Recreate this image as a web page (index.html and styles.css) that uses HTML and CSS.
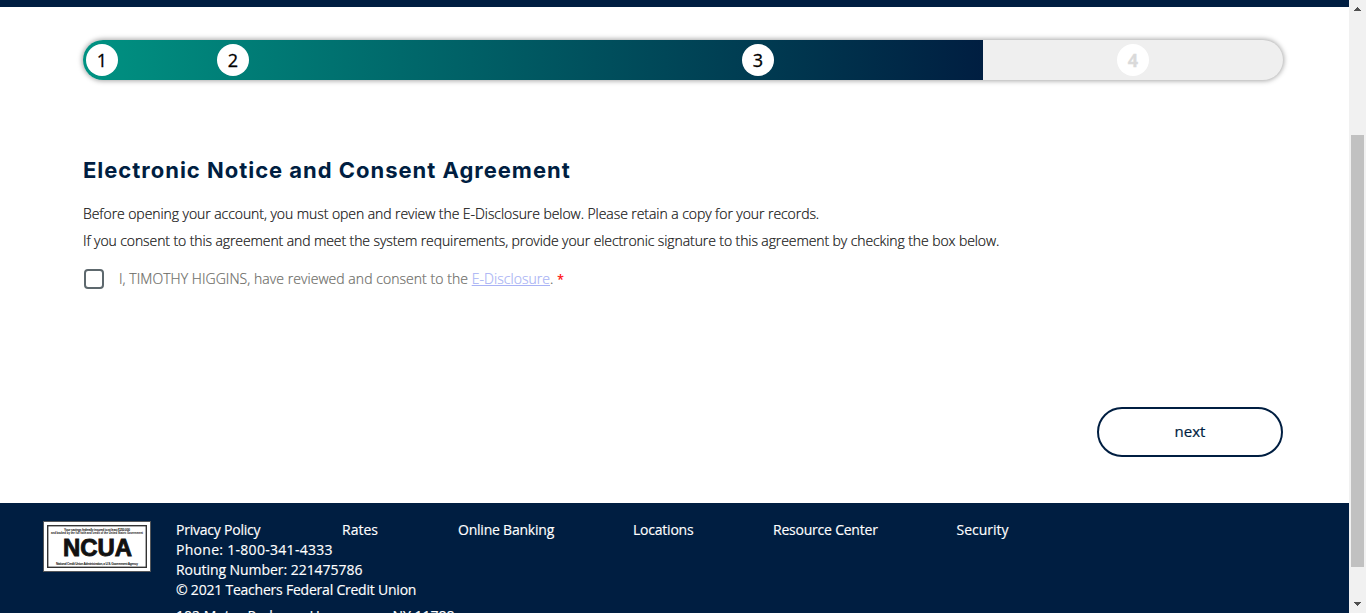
FILE: index.html
```html
<!DOCTYPE html>
<html lang="en">
<head>
<meta charset="utf-8">
<title>Electronic Notice and Consent Agreement</title>
<link rel="stylesheet" href="styles.css">
</head>
<body>
<div class="page">
  <header class="topbar"></header>
  <main class="content">
    <div class="progress">
      <div class="progress-fill">
        <span class="step step-1">1</span>
        <span class="step step-2">2</span>
        <span class="step step-3">3</span>
      </div>
      <div class="progress-rest"><span class="step step-4">4</span></div>
    </div>
    <h1 class="title">Electronic Notice and Consent Agreement</h1>
    <p class="text text-first">Before opening your account, you must open and review the E-Disclosure below. Please retain a copy for your records.</p>
    <p class="text text-second">If you consent to this agreement and meet the system requirements, provide your electronic signature to this agreement by checking the box below.</p>
    <label class="consent">
      <span class="checkbox"></span>
      <span class="consent-text">I, TIMOTHY HIGGINS, have reviewed and consent to the <a class="link">E-Disclosure</a>. <span class="required">*</span></span>
    </label>
    <div class="actions"><button class="next">next</button></div>
  </main>
  <footer class="footer">
    <svg class="ncua" width="108" height="51" viewBox="0 0 108 51">
      <rect x=".5" y=".5" width="107" height="50" fill="#fff" stroke="#55575a"/>
      <rect x="4.7" y="4.7" width="98.6" height="41.6" fill="#fff" stroke="#333" stroke-width="1.4"/>
      <g fill="#111" font-family="Liberation Sans, sans-serif" font-weight="700" text-anchor="middle">
        <text x="54" y="9.8" font-size="3.2" textLength="66">Your savings federally insured to at least $250,000</text>
        <text x="54" y="13.2" font-size="3" textLength="92" lengthAdjust="spacingAndGlyphs">and backed by the full faith and credit of the United States Government</text>
        <text x="54.5" y="35.4" font-size="24" textLength="69" lengthAdjust="spacingAndGlyphs" stroke="#111" stroke-width=".9">NCUA</text>
        <text x="54" y="43.5" font-size="3.2" textLength="82">National Credit Union Administration, a U.S. Government Agency</text>
      </g>
    </svg>
    <div class="footer-info">
      <nav class="links">
        <a class="l-privacy">Privacy Policy</a><a class="l-rates">Rates</a><a class="l-banking">Online Banking</a><a class="l-locations">Locations</a><a class="l-resource">Resource Center</a><a class="l-security">Security</a>
      </nav>
      <div class="phone">Phone: 1-800-341-4333</div>
      <div class="routing">Routing Number: 221475786</div>
      <div class="copyright">© 2021 Teachers Federal Credit Union</div>
      <div class="address">102 Motor Parkway, Hauppauge, NY 11788</div>
    </div>
  </footer>
</div>
<div class="scrollbar">
  <svg class="arrow" width="7" height="4" viewBox="0 0 7 4" shape-rendering="crispEdges"><path d="M3 0h1v1h1v1h1v1h1v1H0V3h1V2h1V1h1z" fill="#505050"/></svg>
  <div class="thumb"></div>
  <svg class="arrow arrow-down" width="7" height="4" viewBox="0 0 7 4" shape-rendering="crispEdges"><path d="M0 0h7v1H6v1H5v1H4v1H3V3H2V2H1V1H0z" fill="#505050"/></svg>
</div>
</body>
</html>
```
FILE: styles.css
```css
* { box-sizing: border-box; }
body {
  margin: 0;
  width: 1366px;
  height: 613px;
  overflow: hidden;
  display: flex;
  background: #fff;
  font-family: "Open Sans", "Noto Sans", sans-serif;
  font-size: 14px;
}
.page { width: 1349px; height: 613px; overflow: hidden; display: flex; flex-direction: column; }
.topbar { height: 7px; flex: none; background: #001e41; }
.content { height: 496px; flex: none; padding: 33px 66px 0 83px; display: flex; flex-direction: column; }
.progress {
  display: flex;
  height: 40px;
  width: 1200px;
  flex: none;
  border-radius: 20px;
  overflow: hidden;
  background: #efefef;
  box-shadow: 0 0 5px 1px rgba(0, 0, 0, .35);
}
.progress-fill { display: flex; align-items: center; width: 900px; background: linear-gradient(90deg, #009282, #001e41); }
.progress-rest { display: flex; align-items: center; flex: 1; }
.step {
  display: flex;
  align-items: center;
  justify-content: center;
  width: 32px;
  height: 32px;
  border-radius: 50%;
  background: #fff;
  color: #000;
  font-size: 18px;
  font-weight: 500;
  line-height: 30px;
  -webkit-text-stroke: .3px;
}
.step-1 { margin-left: 3px; }
.step-2 { margin-left: 99px; }
.step-3 { margin-left: 493px; }
.step-4 { margin-left: 134px; color: #dadada; font-weight: 700; }
.title {
  margin: 74px 0 0;
  height: 32px;
  font: 700 22px/32px Inter, sans-serif;
  letter-spacing: .98px;
  color: #001e41;
  white-space: nowrap;
}
.text { margin: 0; height: 27px; line-height: 27px; color: #111; font-weight: 300; -webkit-text-stroke: .2px; white-space: nowrap; }
.text-first { margin-top: 14px; letter-spacing: -.063px; }
.text-second { letter-spacing: -.093px; }
.consent { display: flex; align-items: center; height: 22px; margin-top: 14px; padding-left: 1px; gap: 15px; color: #6d6d68; font-weight: 300; white-space: nowrap; }
.consent-text { padding-bottom: 2px; letter-spacing: .05px; -webkit-text-stroke: .2px; }
.checkbox { width: 20px; height: 20px; border: 2px solid #5d686d; border-radius: 4px; }
.link { color: #a9b3f5; text-decoration: underline; }
.required { color: #f00; font-weight: 400; font-size: 12px; }
.actions { display: flex; justify-content: flex-end; margin-top: 117px; }
.next {
  width: 186px;
  height: 50px;
  padding: 0 0 2px;
  border: 2px solid #001e41;
  border-radius: 25px;
  background: #fff;
  color: #001e41;
  font: 500 15px/44px "Open Sans", sans-serif;
  -webkit-text-stroke: .2px;
}
.footer { flex: none; height: 110px; background: #001e41; display: flex; overflow: hidden; padding: 18px 0 0 43px; color: #fff; }
.ncua { flex: none; }
.footer-info { margin: -1px 0 0 25px; line-height: 20px; white-space: nowrap; -webkit-text-stroke: .15px; }
.links { display: grid; grid-template-columns: 166px 116px 175px 140px 183.5px 100px; letter-spacing: -.22px; }
.l-rates, .l-security { letter-spacing: 0; }
.phone { letter-spacing: .29px; }
.routing { letter-spacing: -.05px; }
.copyright { letter-spacing: -.22px; }
.address { margin-top: 6px; }
.scrollbar { width: 17px; height: 613px; background: #f1f1f1; display: flex; flex-direction: column; align-items: center; padding-top: 7px; }
.arrow { flex: none; }
.thumb { width: 13px; height: 432px; flex: none; margin-top: 124px; background: #c1c1c1; }
.arrow-down { margin-top: 35px; }
```
